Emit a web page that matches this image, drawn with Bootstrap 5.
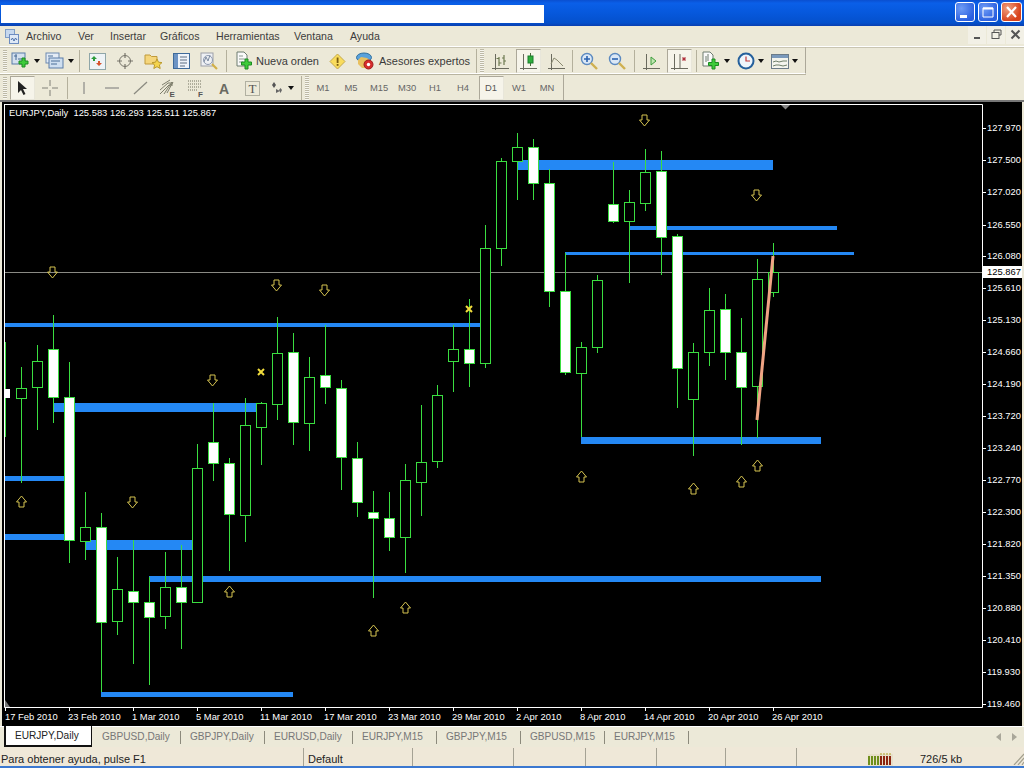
<!DOCTYPE html>
<html lang="es">
<head>
<meta charset="utf-8">
<title>MetaTrader</title>
<link href="https://cdn.jsdelivr.net/npm/bootstrap@5.3.0/dist/css/bootstrap.min.css" rel="stylesheet">
<style>
html,body{width:1024px;height:768px;overflow:hidden;background:#ece9d8;font-family:"Liberation Sans",Arial,sans-serif;font-size:10.5px;color:#222}
.mt-window{width:1024px;height:768px}
.mt-title{height:26px;background:linear-gradient(#0a4fd0 0,#0a5fe8 12%,#0658dc 50%,#0450cc 88%,#0a3fb0 100%);padding:5px 0 3px 1px}
.mt-title-white{width:543px;height:18px;background:#fff}
.mt-winbtns{margin-top:-3px;padding-right:2px;gap:3px}
.mt-winbtn{width:20px;height:20px;border:1px solid #fff;border-radius:3px;background:radial-gradient(circle at 30% 30%,#6f9cf5,#2a5fe0 75%)}
.mt-winbtn.closebtn{width:21px;background:radial-gradient(circle at 30% 30%,#f0a080,#d8431c 70%)}
.mt-menu{height:21px;padding-left:5px;border-bottom:1px solid #fff;box-shadow:0 1px 0 #c9c5b2}
.mt-menu .nav-link{color:#3c3c3c;padding:0;font-size:10.6px;line-height:20px}
.mt-menu-items{margin-left:7px}
.mt-m1{width:52px}.mt-m2{width:32px}.mt-m3{width:50px}.mt-m4{width:56px}.mt-m5{width:78px}.mt-m6{width:56px}
.mt-mdi{gap:1px;margin-top:-3px}
.mt-mdibtn{width:18px;height:18px;background:#f2f0e6;color:#555;line-height:1}
.mt-bars{height:53px;position:relative}
.mt-tb{height:27px;padding-top:2px;border-bottom:1px solid #fff;box-shadow:0 1px 0 #b8b4a0}
.mt-tb1{width:806px;border-right:1px solid #aca899}
.mt-tb2{width:564px;height:26px;border-right:1px solid #aca899;border-bottom:0;box-shadow:none}
.mt-grip{width:8px;height:22px;flex:none;padding-left:3px}
.mt-grip i{display:block;width:4px;height:100%;background:repeating-linear-gradient(#bdb9a6 0 1px,#f7f6ef 1px 2px)}
.mt-sl{width:28px;height:24px;flex:none;padding:0;border:1px solid transparent;border-radius:0;display:flex;align-items:center;justify-content:center;color:#555;font-size:10px;--bs-btn-active-bg:#f6f4ea}
.mt-sl.active{background:#f6f4ea!important;border-color:#aca899 #e8e6da #e8e6da #aca899!important;color:#555}
.mt-sl.pw{width:25px;margin:0 1.5px}
.mt-dd{width:34px;height:24px;flex:none;display:flex;align-items:center;justify-content:center;gap:3px}
.mt-dd-n{width:32px}
.mt-caret{width:0;height:0;border:3.5px solid transparent;border-top:4px solid #111;border-bottom:0;flex:none}
.mt-sep{width:6px;height:22px;flex:none;display:flex;justify-content:center}
.mt-sep i{display:block;width:1px;height:100%;background:#b4b09c}
.mt-sep-w{width:7px}.mt-sep-n{width:5px}
.mt-endgrip{width:13px;height:24px;flex:none;display:flex;gap:3px;padding-left:3px}
.mt-endgrip-tf{width:11px;padding-left:3px}
.mt-endgrip b{display:block;width:1px;height:100%;background:#b4b09c}
.mt-endgrip i{display:block;width:4px;height:100%;background:repeating-linear-gradient(#bdb9a6 0 1px,#f7f6ef 1px 2px)}
.mt-textbtn{height:24px;flex:none;display:flex;align-items:center;gap:3px;font-size:11px;color:#3a3a3a}
.mt-tb-order{width:93px;padding-left:6px}
.mt-tb-exp{width:122px;padding-left:5px;gap:5px}
.mt-tf{font-family:"Liberation Sans",sans-serif;font-size:9.4px;color:#666}
.mt-chart{height:626px;background:#000;border-top:2px solid #777;line-height:0}
.mt-chart svg{display:block}
.mt-chart text{font-family:"Liberation Sans",Arial,sans-serif;font-size:9.4px;fill:#fff}
.mt-tabs{height:21px;border-top:1px solid #fff;background:#ece9d8;padding-left:4px;color:#777}
.mt-tab{height:20px;padding:0 9px;display:flex;align-items:center;position:relative;font-size:10.1px;flex:none}
.mt-tab:after{content:"";position:absolute;right:0;top:4px;bottom:3px;width:1px;background:#8c8a7c}
.mt-tab.active{width:88px;background:#fff;color:#222;border:1px solid #111;border-width:0 1px 2px 2px;padding-left:9px;margin-top:-1px;height:21px;margin-right:1px}
.mt-tab.active:after{display:none}
.mt-tab-1{width:88px}.mt-tab-2{width:84px}.mt-tab-3{width:88px}.mt-tab-4{width:84px}.mt-tab-5{width:84px}.mt-tab-6{width:84px}.mt-tab-7{width:84px}
.mt-tabs-arrows{gap:11px;padding-right:7px;color:#999}
.mt-status{height:19px;background:#efe8d8;font-size:11px;color:#222;padding-top:1px}
.mt-st{height:18px;border-right:1px solid #a5a294;padding-left:1px;line-height:22px;white-space:nowrap;flex:none;overflow:visible}
.mt-st1{width:304px}.mt-st2{width:109px;padding-left:4px}.mt-st3{width:101px}.mt-st4{width:72px}.mt-st5{width:71px}.mt-st6{width:69px}.mt-st7{width:71px}
.mt-st8{width:123px;padding-left:71px;border:0;display:flex;align-items:flex-end}
.mt-st9{width:55px;padding-left:0;border:0}
.mt-grip2{flex:none;margin-left:38px;margin-top:5px}
.mt-edge{height:2px;background:#3b78d0}
</style>
</head>
<body>
<div class="mt-window d-flex flex-column">

  <div class="mt-title d-flex justify-content-between flex-none">
    <div class="mt-title-white"></div>
    <div class="mt-winbtns d-flex">
      <div class="mt-winbtn"><svg width="18" height="18" viewBox="0 0 18 18"><rect x="4" y="12" width="7" height="3" fill="#fff"/></svg></div>
      <div class="mt-winbtn"><svg width="18" height="18" viewBox="0 0 18 18" fill="none"><path d="M4 5h10v9H4z" stroke="#fff"/><path d="M4 5.500h10" stroke="#fff" stroke-width="2"/></svg></div>
      <div class="mt-winbtn closebtn"><svg width="19" height="18" viewBox="0 0 19 18"><path d="M5 4l9 10M14 4L5 14" stroke="#fff" stroke-width="2.2"/></svg></div>
    </div>
  </div>

  <div class="mt-menu d-flex align-items-center">
    <svg width="14" height="15" viewBox="0 0 14 15"><rect x="0.5" y="0.5" width="9" height="8" fill="#c6d8ee" stroke="#7f9dc6"/><rect x="4.5" y="5.5" width="9" height="9" fill="#dfe9f6" stroke="#6d8cc0"/><path d="M6 11l1.500 -2 1.500 3 1.500 -3 1.500 2" stroke="#4a6ea8" fill="none"/></svg>
    <nav class="nav mt-menu-items flex-grow-1">
      <a class="nav-link mt-m1" href="#">Archivo</a>
      <a class="nav-link mt-m2" href="#">Ver</a>
      <a class="nav-link mt-m3" href="#">Insertar</a>
      <a class="nav-link mt-m4" href="#">Gráficos</a>
      <a class="nav-link mt-m5" href="#">Herramientas</a>
      <a class="nav-link mt-m6" href="#">Ventana</a>
      <a class="nav-link" href="#">Ayuda</a>
    </nav>
    <div class="mt-mdi d-flex">
      <div class="mt-mdibtn d-flex align-items-center justify-content-center"><svg width="11" height="11" viewBox="0 0 11 11"><rect x="2" y="8" width="6" height="2" fill="#555"/></svg></div>
      <div class="mt-mdibtn d-flex align-items-center justify-content-center"><svg width="11" height="11" viewBox="0 0 11 11" fill="none" stroke="#555"><path d="M3 3V1h7v5H8"/><rect x="1" y="3.500" width="7" height="6"/></svg></div>
      <div class="mt-mdibtn d-flex align-items-center justify-content-center"><svg width="11" height="11" viewBox="0 0 11 11"><path d="M1.500 1.500l8 8M9.500 1.500l-8 8" stroke="#555" stroke-width="2"/></svg></div>
    </div>
  </div>

  <div class="mt-bars">
    <!-- toolbar 1 -->
    <div class="mt-tb mt-tb1 d-flex align-items-center">
      <div class="mt-grip"><i></i></div>
      <div class="mt-dd"><svg width="20" height="18" viewBox="0 0 20 18"><rect x="1" y="1" width="13" height="11" fill="#d4e0ee" stroke="#5a7ca8"/><path d="M3 4h3M5 2v6M7 7h4" stroke="#466a96"/><path d="M11 6h3v3h3v3h-3v3h-3v-3H8V9h3z" fill="#3ecb3a" stroke="#1c8c22"/></svg><span class="mt-caret"></span></div>
      <div class="mt-dd"><svg width="20" height="18" viewBox="0 0 20 18"><rect x="1" y="1" width="13" height="10" fill="#e4ecf6" stroke="#6c8ab0"/><rect x="4" y="6" width="14" height="10" fill="#cfdff0" stroke="#5a7ca8"/><path d="M3 4h5M6 9h9M6 12h6" stroke="#4a6e98"/></svg><span class="mt-caret"></span></div>
      <div class="mt-sep mt-sep-w"><i></i></div>
      <button class="btn mt-sl" type="button"><svg width="17" height="17" viewBox="0 0 17 17"><rect x="0.500" y="0.500" width="16" height="16" fill="#eef3f6" stroke="#8fa6a8"/><path d="M5 3l3 3H6v2H4V6H2z" fill="#2c9c3c"/><path d="M10 13l3-3h-2V8H9v2H7z" fill="#d8532c"/></svg></button>
      <button class="btn mt-sl" type="button"><svg width="18" height="18" viewBox="0 0 18 18" fill="none" stroke="#77756a"><circle cx="9" cy="9" r="5.500"/><path d="M9 1v5M9 12v5M1 9h5M12 9h5" stroke-width="1.200"/></svg></button>
      <button class="btn mt-sl" type="button"><svg width="19" height="18" viewBox="0 0 19 18"><path d="M1 3h5l1.500 1.500H13V12H1z" fill="#f5d67c" stroke="#c09a3a"/><path d="M13 7l1.500 3.200 3.500.4-2.600 2.300.8 3.600L13 14.700 9.800 16.500l.8-3.600L8 10.600l3.500-.4z" fill="#f5d44c" stroke="#bb9a2c"/></svg></button>
      <button class="btn mt-sl" type="button"><svg width="17" height="16" viewBox="0 0 17 16"><rect x="0.500" y="0.500" width="16" height="15" fill="#eef3fa" stroke="#3e6a9a"/><rect x="1" y="1" width="4" height="14" fill="#6d94c4"/><path d="M7 4h7M7 7h7M7 10h7M7 13h5" stroke="#5c6c80"/></svg></button>
      <button class="btn mt-sl" type="button"><svg width="18" height="18" viewBox="0 0 18 18" fill="none"><rect x="1" y="1" width="12" height="13" fill="#eef0f4" stroke="#9c9fa8"/><path d="M4 10l2-5 2 4 2-6" stroke="#7b8aa0"/><circle cx="8" cy="8" r="4.500" stroke="#8f9bb0"/><path d="M12 12l5 5" stroke="#d2b048" stroke-width="2.200"/></svg></button>
      <div class="mt-sep mt-sep-w"><i></i></div>
      <div class="mt-textbtn mt-tb-order"><svg width="17" height="20" viewBox="0 0 17 20"><path d="M1 1h7l3 3v11H1z" fill="#fafafa" stroke="#6e7c70"/><path d="M3 5h4M3 8h6M3 11h4" stroke="#8b9890"/><path d="M9 8h3v3h3.500v3H12v4H9v-4H5.500v-3H9z" fill="#3ecb3a" stroke="#1c8c22"/></svg><span>Nueva orden</span></div>
      <button class="btn mt-sl" type="button"><svg width="17" height="17" viewBox="0 0 17 17"><path d="M8.500 1L16 8.500 8.500 16 1 8.500z" fill="#f9dc5c" stroke="#c4a94c" stroke-linejoin="round"/><rect x="7.700" y="4.500" width="1.800" height="5.500" fill="#7a5c10"/><rect x="7.700" y="11" width="1.800" height="1.800" fill="#7a5c10"/></svg></button>
      <div class="mt-textbtn mt-tb-exp"><svg width="18" height="18" viewBox="0 0 18 18"><ellipse cx="8" cy="5.500" rx="7.500" ry="4.500" fill="#5aa2dc" stroke="#31709e"/><path d="M2 8l3-3 6 1 4 3v4l-4 3H6l-4-4z" fill="#e8c060"/><circle cx="12.500" cy="12.500" r="4.500" fill="#d62c2c" stroke="#9c1c1c"/><circle cx="12.500" cy="12.500" r="1.700" fill="#fff"/></svg><span>Asesores expertos</span></div>
      <div class="mt-endgrip"><b></b><i></i></div>
      <button class="btn mt-sl" type="button"><svg width="17" height="17" viewBox="0 0 17 17"><path d="M0 15.500h17M3.500 1v16" stroke="#6a6a5e"/><path d="M7 4v9M4.500 5.500H7M7 10h2.500M12 2v10M10 5h2M12 8h2" stroke="#6d7a50" stroke-width="1.200"/></svg></button>
      <button class="btn mt-sl active pw" type="button"><svg width="17" height="17" viewBox="0 0 17 17"><path d="M0 15.500h17M3.500 1v16" stroke="#6a6a5e"/><path d="M10.500 0v13" stroke="#4a6a3a"/><rect x="8" y="3" width="5" height="7" fill="#2fae3c" stroke="#1a7c2c"/></svg></button>
      <button class="btn mt-sl" type="button"><svg width="17" height="17" viewBox="0 0 17 17" fill="none"><path d="M0 15.500h17M3.500 1v16" stroke="#6a6a5e"/><path d="M3 11l3-6 3 2 6 6" stroke="#8a8a70"/></svg></button>
      <div class="mt-sep mt-sep-n"><i></i></div>
      <button class="btn mt-sl" type="button"><svg width="18" height="18" viewBox="0 0 18 18" fill="none"><circle cx="7" cy="7" r="5.500" fill="#dbe8f6" stroke="#5c8ac0" stroke-width="1.400"/><path d="M4 7h6M7 4v6" stroke="#2a62b0" stroke-width="1.600"/><path d="M11 11l6 6" stroke="#cfb050" stroke-width="2.400"/></svg></button>
      <button class="btn mt-sl" type="button"><svg width="18" height="18" viewBox="0 0 18 18" fill="none"><circle cx="7" cy="7" r="5.500" fill="#dbe8f6" stroke="#5c8ac0" stroke-width="1.400"/><path d="M4 7h6" stroke="#2a62b0" stroke-width="1.600"/><path d="M11 11l6 6" stroke="#cfb050" stroke-width="2.400"/></svg></button>
      <div class="mt-sep"><i></i></div>
      <button class="btn mt-sl" type="button"><svg width="17" height="17" viewBox="0 0 17 17"><path d="M0 15.500h17M3.500 1v16" stroke="#6a6a5e"/><path d="M8 4l5 4-5 4z" fill="#bfe6b0" stroke="#3c9c3c"/></svg></button>
      <button class="btn mt-sl active pw" type="button"><svg width="17" height="17" viewBox="0 0 17 17"><path d="M0 15.500h17M3.500 1v16M9 1v14" stroke="#6a6a5e"/><path d="M11 6h4M13 4l0 4M11.500 4.500l3 3M14.500 4.500l-3 3" stroke="#b0303c"/></svg></button>
      <div class="mt-sep"><i></i></div>
      <div class="mt-dd"><svg width="19" height="20" viewBox="0 0 19 20"><path d="M1 1h7l3 3v11H1z" fill="#fafafa" stroke="#6e7c70"/><path d="M4 5v6M6 3v7" stroke="#6e7c70"/><path d="M10 8h3v3.500h3.500v3H13V18h-3v-3.500H6.500v-3H10z" fill="#3ecb3a" stroke="#1c8c22"/></svg><span class="mt-caret"></span></div>
      <div class="mt-dd"><svg width="18" height="18" viewBox="0 0 18 18"><circle cx="9" cy="9" r="7.500" fill="#eef5fb" stroke="#25609c" stroke-width="2"/><path d="M9 4.500V9h4" stroke="#c43838" fill="none" stroke-width="1.200"/></svg><span class="mt-caret"></span></div>
      <div class="mt-dd"><svg width="18" height="15" viewBox="0 0 18 15"><rect x="0.500" y="0.500" width="17" height="14" fill="#f4f5ee" stroke="#6c7c88"/><rect x="1" y="1" width="16" height="3" fill="#7b9abc"/><path d="M2 8l3-1 3 1 4-1 4 0M2 12l3-1 3 0 4 1 4-1" stroke="#70806a" fill="none"/></svg><span class="mt-caret"></span></div>
    </div>
    <!-- toolbar 2 -->
    <div class="mt-tb mt-tb2 d-flex align-items-center">
      <div class="mt-grip"><i></i></div>
      <button class="btn mt-sl active pw" type="button"><svg width="12" height="16" viewBox="0 0 12 16"><path d="M2 1v12l3-3 2.500 5 2-1L7 9h4z" fill="#222"/></svg></button>
      <button class="btn mt-sl" type="button"><svg width="16" height="16" viewBox="0 0 16 16"><path d="M8 0v6M8 10v6M0 8h6M10 8h6" stroke="#808078"/></svg></button>
      <div class="mt-sep"><i></i></div>
      <button class="btn mt-sl" type="button"><svg width="4" height="14" viewBox="0 0 4 14"><path d="M2 1v12" stroke="#777"/></svg></button>
      <button class="btn mt-sl" type="button"><svg width="14" height="4" viewBox="0 0 14 4"><path d="M0 2h14" stroke="#777"/></svg></button>
      <button class="btn mt-sl" type="button"><svg width="15" height="14" viewBox="0 0 15 14"><path d="M1 13L14 1" stroke="#8a8a80" stroke-width="1.200"/></svg></button>
      <button class="btn mt-sl" type="button"><svg width="18" height="18" viewBox="0 0 18 18"><path d="M1 11L9 4l5 0M1 15L10 6l4 0M3 6l8-5M5 15l8-12M8 14L14 3" stroke="#70705f" fill="none" stroke-width=".9"/><text x="10.500" y="17.500" font-family="Liberation Sans,sans-serif" font-size="8" font-weight="700" fill="#555">E</text></svg></button>
      <button class="btn mt-sl" type="button"><svg width="18" height="18" viewBox="0 0 18 18"><path d="M1 2h13M1 5h13M1 8h13M1 11h10" stroke="#70705f" stroke-dasharray="1 1" fill="none"/><text x="11" y="17.500" font-family="Liberation Sans,sans-serif" font-size="8" font-weight="700" fill="#555">F</text></svg></button>
      <button class="btn mt-sl" type="button"><svg width="14" height="14" viewBox="0 0 14 14"><text x="7" y="12.500" text-anchor="middle" font-family="Liberation Sans,sans-serif" font-size="14" font-weight="700" fill="#6a6a62">A</text></svg></button>
      <button class="btn mt-sl" type="button"><svg width="15" height="15" viewBox="0 0 15 15"><rect x="0.500" y="0.500" width="14" height="14" fill="none" stroke="#77776a" stroke-dasharray="1 1"/><text x="7.500" y="12" text-anchor="middle" font-family="Liberation Serif,serif" font-size="13" fill="#555">T</text></svg></button>
      <div class="mt-dd mt-dd-n"><svg width="14" height="14" viewBox="0 0 14 14"><path d="M1 4h4L3 1zM1 4l2 3 2-3" fill="#555"/><path d="M5 8l4 2-4 2zM8 9h3l-1.500 -2zM8 9l1.500 3 1.500 -3" fill="#666"/></svg><span class="mt-caret"></span></div>
      <div class="mt-endgrip mt-endgrip-tf"><b></b><i></i></div>
      <button class="btn mt-sl mt-tf" type="button">M1</button>
      <button class="btn mt-sl mt-tf" type="button">M5</button>
      <button class="btn mt-sl mt-tf" type="button">M15</button>
      <button class="btn mt-sl mt-tf" type="button">M30</button>
      <button class="btn mt-sl mt-tf" type="button">H1</button>
      <button class="btn mt-sl mt-tf" type="button">H4</button>
      <button class="btn mt-sl mt-tf active pw" type="button">D1</button>
      <button class="btn mt-sl mt-tf" type="button">W1</button>
      <button class="btn mt-sl mt-tf" type="button">MN</button>
    </div>
  </div>

  <div class="mt-chart" id="chartbox"></div>

  <div class="mt-tabs d-flex align-items-center">
    <div class="mt-tab active">EURJPY,Daily</div>
    <div class="mt-tab mt-tab-1">GBPUSD,Daily</div>
    <div class="mt-tab mt-tab-2">GBPJPY,Daily</div>
    <div class="mt-tab mt-tab-3">EURUSD,Daily</div>
    <div class="mt-tab mt-tab-4">EURJPY,M15</div>
    <div class="mt-tab mt-tab-5">GBPJPY,M15</div>
    <div class="mt-tab mt-tab-6">GBPUSD,M15</div>
    <div class="mt-tab mt-tab-7">EURJPY,M15</div>
    <div class="mt-tabs-arrows d-flex ms-auto">
      <svg width="5" height="8" viewBox="0 0 5 8"><path d="M5 0v8L0 4z" fill="#a9a79a"/></svg>
      <svg width="5" height="8" viewBox="0 0 5 8"><path d="M0 0v8l5-4z" fill="#a9a79a"/></svg>
    </div>
  </div>

  <div class="mt-status d-flex">
    <div class="mt-st mt-st1">Para obtener ayuda, pulse F1</div>
    <div class="mt-st mt-st2">Default</div>
    <div class="mt-st mt-st3"></div>
    <div class="mt-st mt-st4"></div>
    <div class="mt-st mt-st5"></div>
    <div class="mt-st mt-st6"></div>
    <div class="mt-st mt-st7"></div>
    <div class="mt-st mt-st8"><svg width="25" height="14" viewBox="0 0 25 14"><rect x="0" y="2" width="25" height="12" fill="#e7dfca"/><path d="M1 4v9M4 4v9M7 4v9M10 4v9" stroke="#6f8f1c" stroke-width="2"/><path d="M13 4v9M16 4v9M19 4v9M22 4v9" stroke="#8c2410" stroke-width="2"/><path d="M12 2h12" stroke="#b0a020" stroke-dasharray="2 1"/></svg></div>
    <div class="mt-st mt-st9">726/5 kb</div>
    <svg class="mt-grip2" width="11" height="12" viewBox="0 0 11 12"><path d="M1 12L11 1M5 12l6-7M9 12l2-3" stroke="#a3a08f" stroke-width="1.200"/></svg>
  </div>
  <div class="mt-edge"></div>
</div>

<script>
// [x, wickTop, wickBottom, bodyTop, bodyBottom, white]
var C=[[21,367,483,388,398,0],[37,345,430,361,387,0],[53,315,423,349,397,1],[69,362,563,397,540,1],[85,492,560,527,541,0],[101,513,692,527,622,1],[117,557,635,589,621,0],[133,540,664,591,602,1],[149,577,685,602,617,1],[165,552,629,587,616,0],[181,545,649,587,602,1],[197,444,602,468,602,0],[213,403,481,442,463,1],[229,458,571,463,514,1],[245,398,542,425,515,0],[261,402,465,403,427,0],[277,317,420,353,404,0],[293,333,445,352,422,1],[309,357,451,377,423,0],[325,325,404,375,387,1],[341,380,490,388,457,1],[357,442,517,458,502,1],[373,491,598,512,518,1],[389,492,551,518,537,1],[405,464,573,480,537,0],[421,405,516,462,482,0],[437,385,468,395,461,0],[453,325,392,349,361,0],[469,299,387,349,363,1],[485,225,368,248,363,0],[501,158,266,161,248,0],[517,133,200,147,161,0],[533,139,200,147,183,1],[549,169,307,183,291,1],[565,253,375,291,372,1],[581,342,437,347,373,0],[597,275,353,280,347,0],[613,162,223,204,221,1],[629,190,283,202,221,0],[645,149,211,172,203,0],[661,151,275,171,237,1],[677,234,408,236,368,1],[693,343,456,352,399,0],[709,288,366,310,352,0],[725,294,380,309,352,1],[741,318,445,352,387,1],[757,259,438,279,386,0],[773,243,297,272,292,0]];
// [x1,x2,yTop,yBottom]
var L=[[518,773,160,170],[629,837,226,230],[565,854,252,255],[5,480,323,327],[53,257,403,412],[5,65,476,481],[5,65,534,540],[85,192,540,550],[149,821,576,582],[101,293,692,697],[581,821,437,444]];
var U=[[21,502],[229,592],[373,631],[405,608],[581,477],[693,489],[741,482],[757,466]];
var D=[[52,272],[132,502],[212,380],[276,285],[324,290],[644,120],[756,195]];
var P=["127.970","127.500","127.020","126.550","126.080","125.610","125.130","124.660","124.190","123.720","123.240","122.770","122.300","121.820","121.350","120.880","120.410","119.930","119.460"];
var PY=[128,160,192,225,256,288,320,352,384,416,448,480,512,544,576,608,640,672,704];
var T=["17 Feb 2010","23 Feb 2010","1 Mar 2010","5 Mar 2010","11 Mar 2010","17 Mar 2010","23 Mar 2010","29 Mar 2010","2 Apr 2010","8 Apr 2010","14 Apr 2010","20 Apr 2010","26 Apr 2010"];
var G="#3ade40",Y0=102,s='<svg width="1024" height="624" viewBox="0 '+Y0+' 1024 624" xmlns="http://www.w3.org/2000/svg">';
s+='<rect x="0" y="'+Y0+'" width="1024" height="624" fill="#000"/>';
L.forEach(function(l){s+='<rect x="'+l[0]+'" y="'+l[2]+'" width="'+(l[1]-l[0])+'" height="'+(l[3]-l[2])+'" fill="#2488f4"/>';});
s+='<path d="M5 272.500H982" stroke="#8a8a84"/>';
s+='<path d="M5.500 342V437" stroke="'+G+'"/><rect x="5" y="389" width="5" height="9" fill="#fff"/>';
C.forEach(function(c){
  s+='<path d="M'+(c[0]+.5)+' '+c[1]+'V'+c[2]+'" stroke="'+G+'"/>';
  s+='<rect x="'+(c[0]-4.5)+'" y="'+(c[3]+.5)+'" width="10" height="'+(c[4]-c[3])+'" fill="'+(c[5]?'#fff':'#000')+'" stroke="'+G+'"/>';
});
function arrow(x,y,up){var d=up?1:-1;
  return '<path d="M'+(x+.5)+' '+(y-6*d)+'l5 '+(6*d)+'h-2.500v'+(5*d)+'h-5v'+(-5*d)+'h-2.500z" fill="none" stroke="#d6c450"/>';}
U.forEach(function(a){s+=arrow(a[0],a[1],1);});
D.forEach(function(a){s+=arrow(a[0],a[1],0);});
[[261,372],[469,309]].forEach(function(m){s+='<path d="M'+(m[0]-3)+' '+(m[1]-3)+'l6 6m0-6l-6 6" stroke="#f0dc3c" stroke-width="2"/>';});
s+='<path d="M757 420L773 256" stroke="#f0a484" stroke-width="3"/>';
s+='<path d="M4.500 104V707.500H982.500V104.500H4" fill="none" stroke="#fff"/>';
s+='<path d="M5 700l0 7 5 0z" fill="#777"/>';
s+='<path d="M781 105h9l-4.500 4.500z" fill="#888"/>';
P.forEach(function(p,i){s+='<path d="M983 '+(PY[i]+.5)+'h3" stroke="#fff"/><text x="987" y="'+(PY[i]+3)+'">'+p+'</text>';});
s+='<rect x="983" y="266" width="39" height="12" fill="#fff"/><text x="987" y="275" style="fill:#000">125.867</text>';
T.forEach(function(t,i){var x=5+i*64;s+='<path d="M'+(x+.5)+' 708v3" stroke="#fff"/><text x="'+(x-1+(i==0?1:0))+'" y="719.500">'+t+'</text>';});
s+='<text x="9" y="115.500">EURJPY,Daily&#160;&#160;125.583 126.293 125.511 125.867</text>';
s+='<rect x="1022" y="'+Y0+'" width="2" height="624" fill="#ece9d8"/><rect x="0" y="'+Y0+'" width="2" height="624" fill="#ece9d8"/>';
s+='</svg>';
document.getElementById('chartbox').innerHTML=s;
</script>
<script src="https://cdn.jsdelivr.net/npm/bootstrap@5.3.0/dist/js/bootstrap.bundle.min.js"></script>
</body>
</html>
